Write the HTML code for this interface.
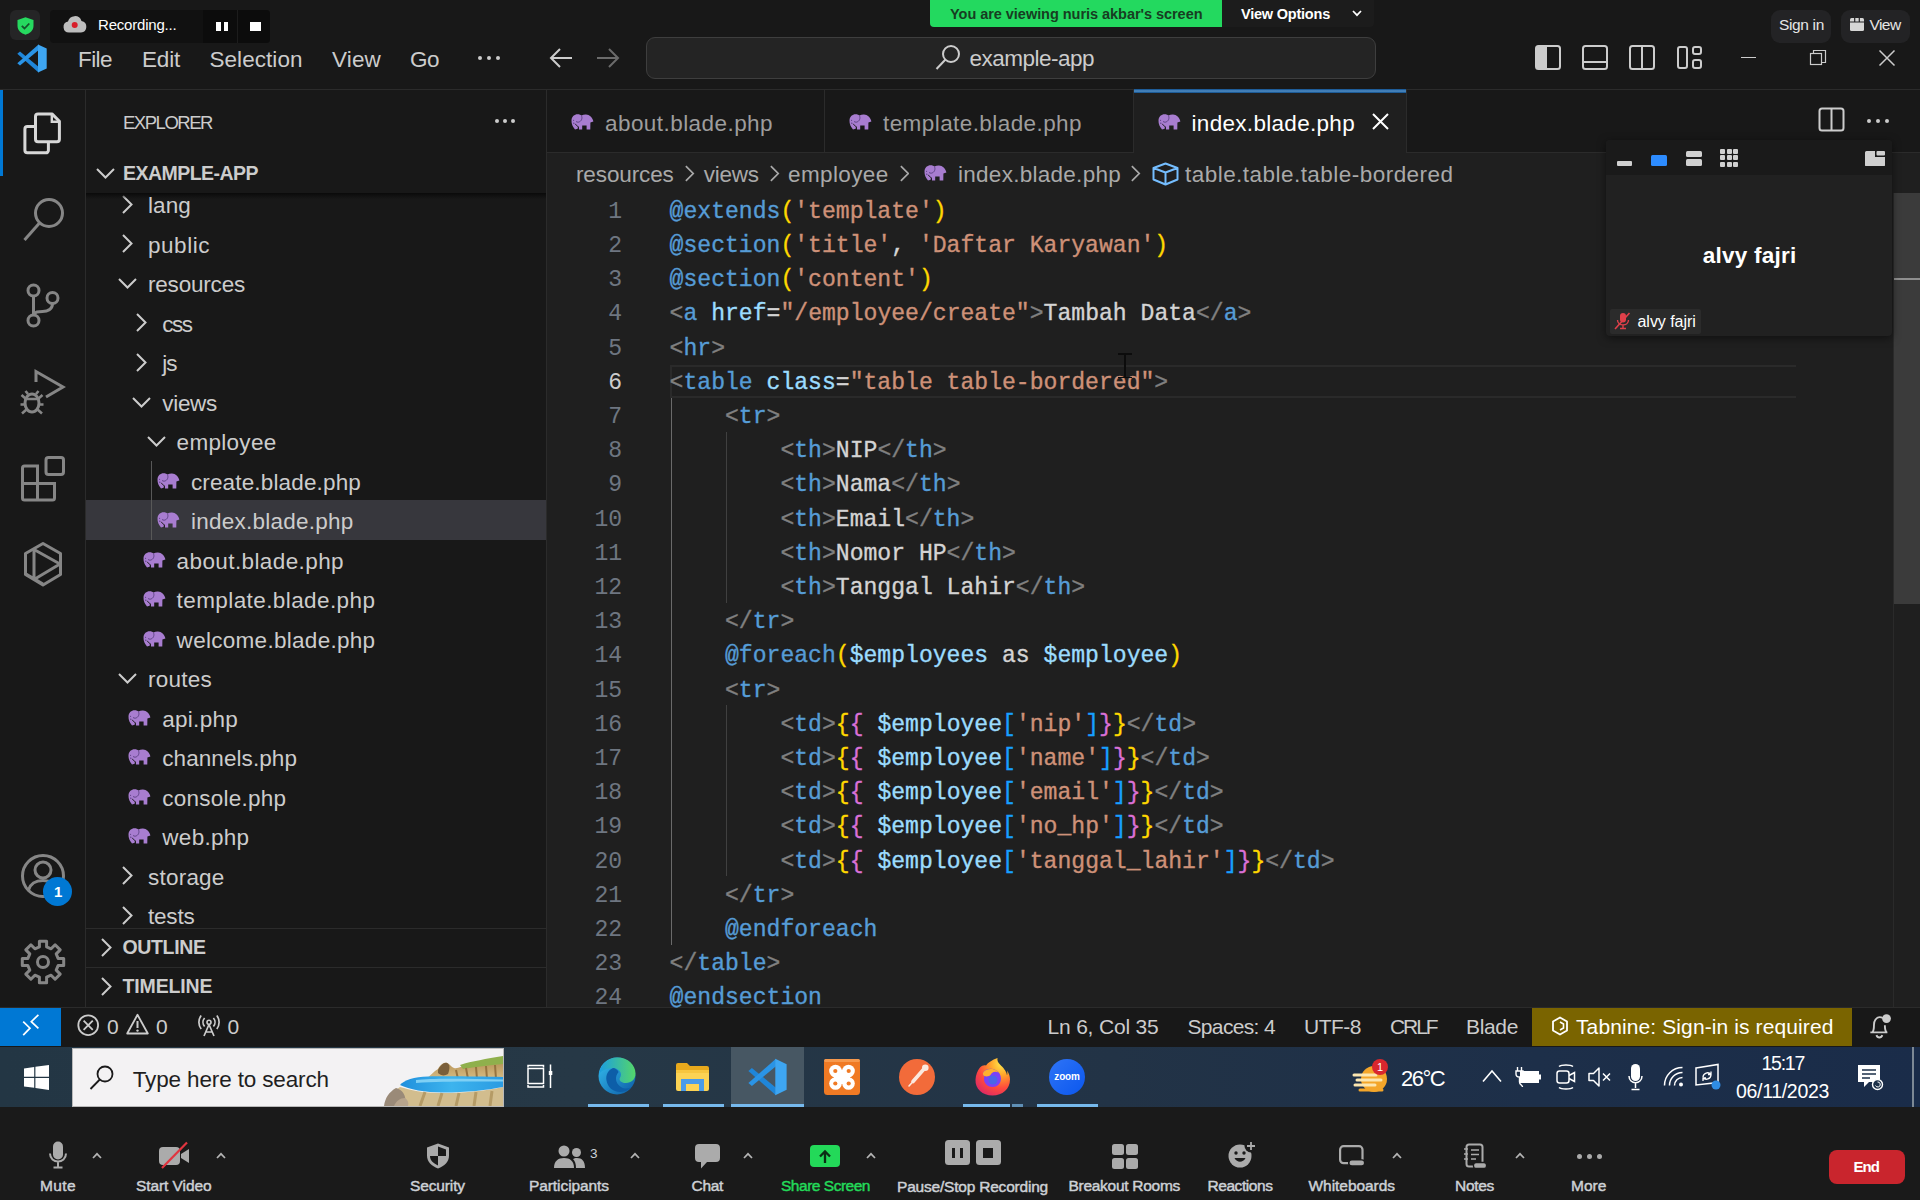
<!DOCTYPE html><html><head><meta charset="utf-8"><title>example-app</title><style>
html,body{margin:0;padding:0;background:#181818;overflow:hidden}
#root{position:relative;width:1920px;height:1200px;overflow:hidden;background:#181818;font-family:"Liberation Sans", sans-serif}
#root div,#root svg,#root span{position:absolute;display:block}
#root span{white-space:pre;line-height:1}
#root span i{font-style:normal}
</style></head><body><div id="root">
<div style="left:0px;top:0px;width:1920px;height:1007px;background:#181818;"></div>
<div style="left:0px;top:89px;width:1920px;height:1px;background:#2b2b2b;"></div>
<div style="left:85px;top:90px;width:1px;height:917px;background:#2b2b2b;"></div>
<div style="left:546px;top:90px;width:1px;height:917px;background:#2b2b2b;"></div>
<div style="left:547px;top:153px;width:1373px;height:854px;background:#1f1f1f;"></div>
<div style="left:547px;top:152px;width:1373px;height:1px;background:#2b2b2b;"></div>
<div style="left:824px;top:90px;width:1px;height:62px;background:#2b2b2b;"></div>
<div style="left:1133px;top:90px;width:1px;height:62px;background:#2b2b2b;"></div>
<div style="left:1134px;top:90px;width:272px;height:63px;background:#1f1f1f;"></div>
<div style="left:1134px;top:89px;width:272px;height:4px;background:linear-gradient(#0b4a88,#3f7cb6 35%,#4683ba 60%,#0b4a88);"></div>
<div style="left:1406px;top:90px;width:1px;height:62px;background:#2b2b2b;"></div>
<div style="left:0px;top:90px;width:3px;height:86px;background:#0078d4;"></div>
<div style="left:477.5px;top:55.5px;width:4px;height:4px;background:#cccccc;border-radius:2px;"></div>
<div style="left:486.5px;top:55.5px;width:4px;height:4px;background:#cccccc;border-radius:2px;"></div>
<div style="left:495.5px;top:55.5px;width:4px;height:4px;background:#cccccc;border-radius:2px;"></div>
<svg style="left:548px;top:46px;" width="26" height="24" viewBox="0 0 26 24"><path d="M24 12H3M12 3L3 12l9 9" fill="none" stroke="#cccccc" stroke-width="2"/></svg>
<svg style="left:595px;top:46px;" width="26" height="24" viewBox="0 0 26 24"><path d="M2 12h21M14 3l9 9-9 9" fill="none" stroke="#6b6b6b" stroke-width="2"/></svg>
<div style="left:646px;top:37px;width:730px;height:41.5px;background:#242424;border:1px solid #3e3e3e;border-radius:9px;box-sizing:border-box;"></div>
<svg style="left:934px;top:43px;" width="28" height="28" viewBox="0 0 28 28"><circle cx="17" cy="11" r="8" fill="none" stroke="#cccccc" stroke-width="2"/><path d="M11.5 16.5L2.5 26" stroke="#cccccc" stroke-width="2" fill="none"/></svg>
<svg style="left:1535px;top:45px;" width="26" height="25" viewBox="0 0 26 25"><rect x="1" y="1" width="24" height="23" rx="2.5" fill="none" stroke="#cccccc" stroke-width="2"/><path d="M1 3.5a2.5 2.5 0 0 1 2.5-2.5H12v23H3.5A2.5 2.5 0 0 1 1 21.5z" fill="#cccccc"/></svg>
<svg style="left:1582px;top:45px;" width="26" height="25" viewBox="0 0 26 25"><rect x="1" y="1" width="24" height="23" rx="2.5" fill="none" stroke="#cccccc" stroke-width="2"/><path d="M1 17h24" stroke="#cccccc" stroke-width="2"/></svg>
<svg style="left:1629px;top:45px;" width="26" height="25" viewBox="0 0 26 25"><rect x="1" y="1" width="24" height="23" rx="2.5" fill="none" stroke="#cccccc" stroke-width="2"/><path d="M13 1v23" stroke="#cccccc" stroke-width="2"/></svg>
<svg style="left:1677px;top:45px;" width="26" height="25" viewBox="0 0 26 25"><rect x="1" y="2" width="9" height="21" rx="2" fill="none" stroke="#cccccc" stroke-width="2"/><rect x="16" y="2" width="8" height="7" rx="2" fill="none" stroke="#cccccc" stroke-width="2"/><rect x="16" y="15" width="8" height="8" rx="2" fill="none" stroke="#cccccc" stroke-width="2"/></svg>
<div style="left:1741px;top:57px;width:15px;height:1.3px;background:#cccccc;"></div>
<svg style="left:1809px;top:49px;" width="18" height="18" viewBox="0 0 18 18"><rect x="1.5" y="4.5" width="11" height="11" fill="none" stroke="#cccccc" stroke-width="1.2"/><path d="M4.5 4.5v-3h12v12h-4" fill="none" stroke="#cccccc" stroke-width="1.2"/></svg>
<svg style="left:1878px;top:49px;" width="18" height="18" viewBox="0 0 18 18"><path d="M1.5 1.5l15 15M16.5 1.5l-15 15" stroke="#cccccc" stroke-width="1.5" fill="none"/></svg>
<svg style="left:17px;top:44px;" width="30" height="29" viewBox="0 0 30 29"><path d="M.3 9.800L3 7.6 21.5 22.800V28.600z" fill="#1f86d9"/><path d="M.3 19.200L3 21.4 21.5 6.200V.4z" fill="#2a94e6"/><path d="M21 .4L29.7 4.600V24.400L21 28.600z" fill="#3ea6f2"/></svg>
<svg style="left:22px;top:111px;" width="41" height="45" viewBox="0 0 41 45"><path d="M13.5 28.3V5.4a2.5 2.5 0 0 1 2.5-2.5H30L37.4 10.3V28.3a2.5 2.5 0 0 1-2.5 2.5H16a2.5 2.5 0 0 1-2.5-2.500z" fill="none" stroke="#d7d7d7" stroke-width="3" stroke-linejoin="round"/><path d="M29.8 3.5V10.8H37" fill="none" stroke="#d7d7d7" stroke-width="2.4"/><path d="M13.5 15.5H5.4a2.5 2.5 0 0 0-2.5 2.5V39.3a2.5 2.5 0 0 0 2.5 2.5H23.9a2.5 2.5 0 0 0 2.5-2.5V30.8" fill="none" stroke="#d7d7d7" stroke-width="3"/></svg>
<svg style="left:22px;top:196px;" width="44" height="46" viewBox="0 0 44 46"><circle cx="27" cy="17" r="13.5" fill="none" stroke="#868686" stroke-width="3"/><path d="M17.5 27L2.5 44" stroke="#868686" stroke-width="3" fill="none"/></svg>
<svg style="left:24px;top:282px;" width="38" height="48" viewBox="0 0 38 48"><circle cx="9.5" cy="8.5" r="5.5" fill="none" stroke="#868686" stroke-width="3"/><circle cx="9.5" cy="38.5" r="5.5" fill="none" stroke="#868686" stroke-width="3"/><circle cx="28.5" cy="16" r="5.5" fill="none" stroke="#868686" stroke-width="3"/><path d="M9.5 14v19M28.5 21.500c0 6-5 8-10 8-4 0-8 0-9 3.5" fill="none" stroke="#868686" stroke-width="3"/></svg>
<svg style="left:20px;top:368px;" width="46" height="48" viewBox="0 0 46 48"><path d="M16 14V3.500L43 19 26 29" fill="none" stroke="#868686" stroke-width="3" stroke-linejoin="miter"/><ellipse cx="12" cy="35" rx="7" ry="9" fill="none" stroke="#868686" stroke-width="3"/><path d="M5 31h14M1.5 27l4 3.500M22.5 27l-4 3.500M0.5 36.500h4.500M19 36.500h4.500M2 45.500l4.5-4M22 45.500l-4.5-4M8 26l-2.5-3M16 26l2.5-3" fill="none" stroke="#868686" stroke-width="2.6"/></svg>
<svg style="left:20px;top:455px;" width="46" height="47" viewBox="0 0 46 47"><path d="M17.5 11H4.500a2 2 0 0 0-2 2v30a2 2 0 0 0 2 2h28a2 2 0 0 0 2-2V28.500H17.500zM2.5 28.500h15V45" fill="none" stroke="#868686" stroke-width="3"/><rect x="26" y="2.5" width="17.5" height="17" rx="2.5" fill="none" stroke="#868686" stroke-width="3"/></svg>
<svg style="left:22px;top:541px;" width="42" height="47" viewBox="0 0 42 47"><path d="M21 2.500L38.5 12.500v21L21 44 3.5 33.500v-21z" fill="none" stroke="#868686" stroke-width="3" stroke-linejoin="round"/><path d="M12 8.500v30M12 8.500L38 23 12 38.500M4 33l17 10" fill="none" stroke="#868686" stroke-width="3" stroke-linejoin="round"/></svg>
<svg style="left:20px;top:853px;" width="46" height="46" viewBox="0 0 46 46"><circle cx="23" cy="23" r="20.5" fill="none" stroke="#868686" stroke-width="3"/><circle cx="23" cy="17" r="8" fill="none" stroke="#868686" stroke-width="3"/><path d="M8.5 37c2-6.5 8-9.5 14.5-9.500s12.5 3 14.5 9.5" fill="none" stroke="#868686" stroke-width="3"/></svg>
<div style="left:43px;top:876.5px;width:29px;height:29px;background:#0078d4;border-radius:15px;"></div>
<svg style="left:20px;top:939px;" width="46" height="46" viewBox="0 0 46 46"><path d="M19.4 2.3L26.6 2.3L26.6 7.9L31.1 9.8L35.1 5.8L40.2 10.9L36.2 14.9L38.1 19.4L43.7 19.4L43.7 26.6L38.1 26.6L36.2 31.1L40.2 35.1L35.1 40.2L31.1 36.2L26.6 38.1L26.6 43.7L19.4 43.7L19.4 38.1L14.9 36.2L10.9 40.2L5.8 35.1L9.8 31.1L7.9 26.6L2.3 26.6L2.3 19.4L7.9 19.4L9.8 14.9L5.8 10.9L10.9 5.8L14.9 9.8L19.4 7.9z" fill="none" stroke="#868686" stroke-width="3" stroke-linejoin="round"/><circle cx="23" cy="23" r="5.5" fill="none" stroke="#868686" stroke-width="3"/></svg>
<div style="left:495px;top:118.5px;width:4px;height:4px;background:#cccccc;border-radius:2px;"></div>
<div style="left:503px;top:118.5px;width:4px;height:4px;background:#cccccc;border-radius:2px;"></div>
<div style="left:511px;top:118.5px;width:4px;height:4px;background:#cccccc;border-radius:2px;"></div>
<div style="left:86px;top:500px;width:460px;height:40px;background:#37373d;"></div>
<div style="left:151px;top:461px;width:1px;height:79px;background:#585858;"></div>
<svg style="left:122px;top:194.5px;" width="11" height="19" viewBox="0 0 11 19"><path d="M1 1l8.5 8.500L1 18" fill="none" stroke="#cccccc" stroke-width="2"/></svg>
<svg style="left:122px;top:234px;" width="11" height="19" viewBox="0 0 11 19"><path d="M1 1l8.5 8.500L1 18" fill="none" stroke="#cccccc" stroke-width="2"/></svg>
<svg style="left:118px;top:278px;" width="19" height="11" viewBox="0 0 19 11"><path d="M1 1l8.5 8.500L18 1" fill="none" stroke="#cccccc" stroke-width="2"/></svg>
<svg style="left:136.3px;top:313px;" width="11" height="19" viewBox="0 0 11 19"><path d="M1 1l8.5 8.500L1 18" fill="none" stroke="#cccccc" stroke-width="2"/></svg>
<svg style="left:136.3px;top:352.5px;" width="11" height="19" viewBox="0 0 11 19"><path d="M1 1l8.5 8.500L1 18" fill="none" stroke="#cccccc" stroke-width="2"/></svg>
<svg style="left:132.3px;top:396.5px;" width="19" height="11" viewBox="0 0 19 11"><path d="M1 1l8.5 8.500L18 1" fill="none" stroke="#cccccc" stroke-width="2"/></svg>
<svg style="left:146.6px;top:436px;" width="19" height="11" viewBox="0 0 19 11"><path d="M1 1l8.5 8.500L18 1" fill="none" stroke="#cccccc" stroke-width="2"/></svg>
<svg style="left:156.9px;top:472.5px;" width="23" height="16" viewBox="0 0 23 16"><path d="M4 15.6C2 13 .3 10 .5 6.5.7 2.5 3.5.3 6.5.3 8.5.3 9.8.9 10.5 1.6 11.8.8 13.5.4 15 .500 18.5.7 21.5 3.5 22.4 7.600L19.4 8.6 19.3 15.600H15.600V11.600H11.200V15.600H8L7.4 12.6 6.8 14.800z" fill="#a87dd0"/><path d="M10.4 1.700C11.7 4 10.6 7.6 7.2 8.2 6.3 8.3 5.5 7.9 5 7.4" fill="none" stroke="#4b3470" stroke-width=".75"/><path d="M4.3 9.800C5.2 11.3 6.3 12.3 7.3 12.700L7.3 15.6" fill="none" stroke="#181818" stroke-width="1"/><circle cx="2.6" cy="6.2" r=".55" fill="#4b3470"/><circle cx="2.8" cy="9.2" r=".6" fill="#4b3470"/></svg>
<svg style="left:156.9px;top:512px;" width="23" height="16" viewBox="0 0 23 16"><path d="M4 15.6C2 13 .3 10 .5 6.5.7 2.5 3.5.3 6.5.3 8.5.3 9.8.9 10.5 1.6 11.8.8 13.5.4 15 .500 18.5.7 21.5 3.5 22.4 7.600L19.4 8.6 19.3 15.600H15.600V11.600H11.200V15.600H8L7.4 12.6 6.8 14.800z" fill="#a87dd0"/><path d="M10.4 1.700C11.7 4 10.6 7.6 7.2 8.2 6.3 8.3 5.5 7.9 5 7.4" fill="none" stroke="#4b3470" stroke-width=".75"/><path d="M4.3 9.800C5.2 11.3 6.3 12.3 7.3 12.700L7.3 15.6" fill="none" stroke="#181818" stroke-width="1"/><circle cx="2.6" cy="6.2" r=".55" fill="#4b3470"/><circle cx="2.8" cy="9.2" r=".6" fill="#4b3470"/></svg>
<svg style="left:142.6px;top:551.5px;" width="23" height="16" viewBox="0 0 23 16"><path d="M4 15.6C2 13 .3 10 .5 6.5.7 2.5 3.5.3 6.5.3 8.5.3 9.8.9 10.5 1.6 11.8.8 13.5.4 15 .500 18.5.7 21.5 3.5 22.4 7.600L19.4 8.6 19.3 15.600H15.600V11.600H11.200V15.600H8L7.4 12.6 6.8 14.800z" fill="#a87dd0"/><path d="M10.4 1.700C11.7 4 10.6 7.6 7.2 8.2 6.3 8.3 5.5 7.9 5 7.4" fill="none" stroke="#4b3470" stroke-width=".75"/><path d="M4.3 9.800C5.2 11.3 6.3 12.3 7.3 12.700L7.3 15.6" fill="none" stroke="#181818" stroke-width="1"/><circle cx="2.6" cy="6.2" r=".55" fill="#4b3470"/><circle cx="2.8" cy="9.2" r=".6" fill="#4b3470"/></svg>
<svg style="left:142.6px;top:591px;" width="23" height="16" viewBox="0 0 23 16"><path d="M4 15.6C2 13 .3 10 .5 6.5.7 2.5 3.5.3 6.5.3 8.5.3 9.8.9 10.5 1.6 11.8.8 13.5.4 15 .500 18.5.7 21.5 3.5 22.4 7.600L19.4 8.6 19.3 15.600H15.600V11.600H11.200V15.600H8L7.4 12.6 6.8 14.800z" fill="#a87dd0"/><path d="M10.4 1.700C11.7 4 10.6 7.6 7.2 8.2 6.3 8.3 5.5 7.9 5 7.4" fill="none" stroke="#4b3470" stroke-width=".75"/><path d="M4.3 9.800C5.2 11.3 6.3 12.3 7.3 12.700L7.3 15.6" fill="none" stroke="#181818" stroke-width="1"/><circle cx="2.6" cy="6.2" r=".55" fill="#4b3470"/><circle cx="2.8" cy="9.2" r=".6" fill="#4b3470"/></svg>
<svg style="left:142.6px;top:630.5px;" width="23" height="16" viewBox="0 0 23 16"><path d="M4 15.6C2 13 .3 10 .5 6.5.7 2.5 3.5.3 6.5.3 8.5.3 9.8.9 10.5 1.6 11.8.8 13.5.4 15 .500 18.5.7 21.5 3.5 22.4 7.600L19.4 8.6 19.3 15.600H15.600V11.600H11.200V15.600H8L7.4 12.6 6.8 14.800z" fill="#a87dd0"/><path d="M10.4 1.700C11.7 4 10.6 7.6 7.2 8.2 6.3 8.3 5.5 7.9 5 7.4" fill="none" stroke="#4b3470" stroke-width=".75"/><path d="M4.3 9.800C5.2 11.3 6.3 12.3 7.3 12.700L7.3 15.6" fill="none" stroke="#181818" stroke-width="1"/><circle cx="2.6" cy="6.2" r=".55" fill="#4b3470"/><circle cx="2.8" cy="9.2" r=".6" fill="#4b3470"/></svg>
<svg style="left:118px;top:673px;" width="19" height="11" viewBox="0 0 19 11"><path d="M1 1l8.5 8.500L18 1" fill="none" stroke="#cccccc" stroke-width="2"/></svg>
<svg style="left:128.3px;top:709.5px;" width="23" height="16" viewBox="0 0 23 16"><path d="M4 15.6C2 13 .3 10 .5 6.5.7 2.5 3.5.3 6.5.3 8.5.3 9.8.9 10.5 1.6 11.8.8 13.5.4 15 .500 18.5.7 21.5 3.5 22.4 7.600L19.4 8.6 19.3 15.600H15.600V11.600H11.200V15.600H8L7.4 12.6 6.8 14.800z" fill="#a87dd0"/><path d="M10.4 1.700C11.7 4 10.6 7.6 7.2 8.2 6.3 8.3 5.5 7.9 5 7.4" fill="none" stroke="#4b3470" stroke-width=".75"/><path d="M4.3 9.800C5.2 11.3 6.3 12.3 7.3 12.700L7.3 15.6" fill="none" stroke="#181818" stroke-width="1"/><circle cx="2.6" cy="6.2" r=".55" fill="#4b3470"/><circle cx="2.8" cy="9.2" r=".6" fill="#4b3470"/></svg>
<svg style="left:128.3px;top:749px;" width="23" height="16" viewBox="0 0 23 16"><path d="M4 15.6C2 13 .3 10 .5 6.5.7 2.5 3.5.3 6.5.3 8.5.3 9.8.9 10.5 1.6 11.8.8 13.5.4 15 .500 18.5.7 21.5 3.5 22.4 7.600L19.4 8.6 19.3 15.600H15.600V11.600H11.200V15.600H8L7.4 12.6 6.8 14.800z" fill="#a87dd0"/><path d="M10.4 1.700C11.7 4 10.6 7.6 7.2 8.2 6.3 8.3 5.5 7.9 5 7.4" fill="none" stroke="#4b3470" stroke-width=".75"/><path d="M4.3 9.800C5.2 11.3 6.3 12.3 7.3 12.700L7.3 15.6" fill="none" stroke="#181818" stroke-width="1"/><circle cx="2.6" cy="6.2" r=".55" fill="#4b3470"/><circle cx="2.8" cy="9.2" r=".6" fill="#4b3470"/></svg>
<svg style="left:128.3px;top:788.5px;" width="23" height="16" viewBox="0 0 23 16"><path d="M4 15.6C2 13 .3 10 .5 6.5.7 2.5 3.5.3 6.5.3 8.5.3 9.8.9 10.5 1.6 11.8.8 13.5.4 15 .500 18.5.7 21.5 3.5 22.4 7.600L19.4 8.6 19.3 15.600H15.600V11.600H11.200V15.600H8L7.4 12.6 6.8 14.800z" fill="#a87dd0"/><path d="M10.4 1.700C11.7 4 10.6 7.6 7.2 8.2 6.3 8.3 5.5 7.9 5 7.4" fill="none" stroke="#4b3470" stroke-width=".75"/><path d="M4.3 9.800C5.2 11.3 6.3 12.3 7.3 12.700L7.3 15.6" fill="none" stroke="#181818" stroke-width="1"/><circle cx="2.6" cy="6.2" r=".55" fill="#4b3470"/><circle cx="2.8" cy="9.2" r=".6" fill="#4b3470"/></svg>
<svg style="left:128.3px;top:828px;" width="23" height="16" viewBox="0 0 23 16"><path d="M4 15.6C2 13 .3 10 .5 6.5.7 2.5 3.5.3 6.5.3 8.5.3 9.8.9 10.5 1.6 11.8.8 13.5.4 15 .500 18.5.7 21.5 3.5 22.4 7.600L19.4 8.6 19.3 15.600H15.600V11.600H11.200V15.600H8L7.4 12.6 6.8 14.800z" fill="#a87dd0"/><path d="M10.4 1.700C11.7 4 10.6 7.6 7.2 8.2 6.3 8.3 5.5 7.9 5 7.4" fill="none" stroke="#4b3470" stroke-width=".75"/><path d="M4.3 9.800C5.2 11.3 6.3 12.3 7.3 12.700L7.3 15.6" fill="none" stroke="#181818" stroke-width="1"/><circle cx="2.6" cy="6.2" r=".55" fill="#4b3470"/><circle cx="2.8" cy="9.2" r=".6" fill="#4b3470"/></svg>
<svg style="left:122px;top:866px;" width="11" height="19" viewBox="0 0 11 19"><path d="M1 1l8.5 8.500L1 18" fill="none" stroke="#cccccc" stroke-width="2"/></svg>
<svg style="left:122px;top:905.5px;" width="11" height="19" viewBox="0 0 11 19"><path d="M1 1l8.5 8.500L1 18" fill="none" stroke="#cccccc" stroke-width="2"/></svg>
<div style="left:86px;top:153px;width:460px;height:40px;background:#181818;"></div>
<div style="left:86px;top:193px;width:460px;height:6px;background:linear-gradient(#0a0a0a,rgba(10,10,10,0));"></div>
<svg style="left:96px;top:167.5px;" width="19" height="11" viewBox="0 0 19 11"><path d="M1 1l8.5 8.500L18 1" fill="none" stroke="#cccccc" stroke-width="2"/></svg>
<div style="left:86px;top:927.5px;width:460px;height:79.5px;background:#181818;"></div>
<div style="left:86px;top:927.5px;width:460px;height:1px;background:#2b2b2b;"></div>
<div style="left:86px;top:967px;width:460px;height:1px;background:#2b2b2b;"></div>
<svg style="left:100.5px;top:937.5px;" width="11" height="19" viewBox="0 0 11 19"><path d="M1 1l8.5 8.500L1 18" fill="none" stroke="#cccccc" stroke-width="2"/></svg>
<svg style="left:100.5px;top:977px;" width="11" height="19" viewBox="0 0 11 19"><path d="M1 1l8.5 8.500L1 18" fill="none" stroke="#cccccc" stroke-width="2"/></svg>
<svg style="left:571px;top:114px;" width="23" height="16" viewBox="0 0 23 16"><path d="M4 15.6C2 13 .3 10 .5 6.5.7 2.5 3.5.3 6.5.3 8.5.3 9.8.9 10.5 1.6 11.8.8 13.5.4 15 .500 18.5.7 21.5 3.5 22.4 7.600L19.4 8.6 19.3 15.600H15.600V11.600H11.200V15.600H8L7.4 12.6 6.8 14.800z" fill="#a87dd0"/><path d="M10.4 1.700C11.7 4 10.6 7.6 7.2 8.2 6.3 8.3 5.5 7.9 5 7.4" fill="none" stroke="#4b3470" stroke-width=".75"/><path d="M4.3 9.800C5.2 11.3 6.3 12.3 7.3 12.700L7.3 15.6" fill="none" stroke="#181818" stroke-width="1"/><circle cx="2.6" cy="6.2" r=".55" fill="#4b3470"/><circle cx="2.8" cy="9.2" r=".6" fill="#4b3470"/></svg>
<svg style="left:849px;top:114px;" width="23" height="16" viewBox="0 0 23 16"><path d="M4 15.6C2 13 .3 10 .5 6.5.7 2.5 3.5.3 6.5.3 8.5.3 9.8.9 10.5 1.6 11.8.8 13.5.4 15 .500 18.5.7 21.5 3.5 22.4 7.600L19.4 8.6 19.3 15.600H15.600V11.600H11.200V15.600H8L7.4 12.6 6.8 14.800z" fill="#a87dd0"/><path d="M10.4 1.700C11.7 4 10.6 7.6 7.2 8.2 6.3 8.3 5.5 7.9 5 7.4" fill="none" stroke="#4b3470" stroke-width=".75"/><path d="M4.3 9.800C5.2 11.3 6.3 12.3 7.3 12.700L7.3 15.6" fill="none" stroke="#181818" stroke-width="1"/><circle cx="2.6" cy="6.2" r=".55" fill="#4b3470"/><circle cx="2.8" cy="9.2" r=".6" fill="#4b3470"/></svg>
<svg style="left:1158px;top:114px;" width="23" height="16" viewBox="0 0 23 16"><path d="M4 15.6C2 13 .3 10 .5 6.5.7 2.5 3.5.3 6.5.3 8.5.3 9.8.9 10.5 1.6 11.8.8 13.5.4 15 .500 18.5.7 21.5 3.5 22.4 7.600L19.4 8.6 19.3 15.600H15.600V11.600H11.200V15.600H8L7.4 12.6 6.8 14.800z" fill="#a87dd0"/><path d="M10.4 1.700C11.7 4 10.6 7.6 7.2 8.2 6.3 8.3 5.5 7.9 5 7.4" fill="none" stroke="#4b3470" stroke-width=".75"/><path d="M4.3 9.800C5.2 11.3 6.3 12.3 7.3 12.700L7.3 15.6" fill="none" stroke="#181818" stroke-width="1"/><circle cx="2.6" cy="6.2" r=".55" fill="#4b3470"/><circle cx="2.8" cy="9.2" r=".6" fill="#4b3470"/></svg>
<svg style="left:1371px;top:112px;" width="19" height="19" viewBox="0 0 19 19"><path d="M2 2l15 15M17 2L2 17" stroke="#ffffff" stroke-width="2" fill="none"/></svg>
<svg style="left:1818px;top:107px;" width="27" height="25" viewBox="0 0 27 25"><rect x="1.5" y="1.5" width="24" height="22" rx="2.5" fill="none" stroke="#cccccc" stroke-width="2"/><path d="M13.5 1.5v22" stroke="#cccccc" stroke-width="2"/></svg>
<div style="left:1866.5px;top:118.5px;width:4px;height:4px;background:#cccccc;border-radius:2px;"></div>
<div style="left:1875.5px;top:118.5px;width:4px;height:4px;background:#cccccc;border-radius:2px;"></div>
<div style="left:1884.5px;top:118.5px;width:4px;height:4px;background:#cccccc;border-radius:2px;"></div>
<svg style="left:685px;top:164.5px;" width="9.5" height="17" viewBox="0 0 11 19"><path d="M1 1l8.5 8.500L1 18" fill="none" stroke="#a9a9a9" stroke-width="2"/></svg>
<svg style="left:770px;top:164.5px;" width="9.5" height="17" viewBox="0 0 11 19"><path d="M1 1l8.5 8.500L1 18" fill="none" stroke="#a9a9a9" stroke-width="2"/></svg>
<svg style="left:899.5px;top:164.5px;" width="9.5" height="17" viewBox="0 0 11 19"><path d="M1 1l8.5 8.500L1 18" fill="none" stroke="#a9a9a9" stroke-width="2"/></svg>
<svg style="left:924px;top:165px;" width="23" height="16" viewBox="0 0 23 16"><path d="M4 15.6C2 13 .3 10 .5 6.5.7 2.5 3.5.3 6.5.3 8.5.3 9.8.9 10.5 1.6 11.8.8 13.5.4 15 .500 18.5.7 21.5 3.5 22.4 7.600L19.4 8.6 19.3 15.600H15.600V11.600H11.200V15.600H8L7.4 12.6 6.8 14.800z" fill="#a87dd0"/><path d="M10.4 1.700C11.7 4 10.6 7.6 7.2 8.2 6.3 8.3 5.5 7.9 5 7.4" fill="none" stroke="#4b3470" stroke-width=".75"/><path d="M4.3 9.800C5.2 11.3 6.3 12.3 7.3 12.700L7.3 15.6" fill="none" stroke="#181818" stroke-width="1"/><circle cx="2.6" cy="6.2" r=".55" fill="#4b3470"/><circle cx="2.8" cy="9.2" r=".6" fill="#4b3470"/></svg>
<svg style="left:1131px;top:164.5px;" width="9.5" height="17" viewBox="0 0 11 19"><path d="M1 1l8.5 8.500L1 18" fill="none" stroke="#a9a9a9" stroke-width="2"/></svg>
<svg style="left:1152px;top:162px;" width="27" height="24" viewBox="0 0 27 24"><path d="M13.5 1.5L25.5 6v11.5L13.5 22.5 1.5 17.5V6zM1.5 6l12 4.500L25.5 6M13.5 10.500v12" fill="none" stroke="#75beff" stroke-width="2" stroke-linejoin="round"/></svg>
<div style="left:670px;top:364.5px;width:1126px;height:33.5px;background:transparent;border:2px solid #2a2a2a;border-right:none;box-sizing:border-box;"></div>
<div style="left:670.5px;top:398px;width:1px;height:547.2px;background:#6a6a6a;"></div>
<div style="left:725.9px;top:432px;width:1px;height:171px;background:#404040;"></div>
<div style="left:725.9px;top:704.6px;width:1px;height:171px;background:#404040;"></div>
<div style="left:1894px;top:193px;width:26px;height:411px;background:#3b3b3b;"></div>
<div style="left:1894px;top:278px;width:26px;height:2px;background:#8f8f8f;"></div>
<div style="left:1893px;top:193px;width:1px;height:814px;background:#2a2a2a;"></div>
<div style="left:0px;top:1007px;width:1920px;height:40px;background:#181818;"></div>
<div style="left:0px;top:1006.5px;width:1920px;height:1px;background:#2b2b2b;"></div>
<div style="left:0px;top:1007.5px;width:60.7px;height:38.5px;background:#0078d4;"></div>
<svg style="left:20px;top:1010px;" width="24" height="30" viewBox="0 0 24 30"><path d="M3.2 11.700L10 18.2 3.2 25.200M18.4 4.800L11.3 11.7 18.4 18.4" fill="none" stroke="#ffffff" stroke-width="1.7"/></svg>
<svg style="left:76.8px;top:1014.2px;" width="22.4" height="22.4" viewBox="0 0 22 22"><circle cx="11" cy="11" r="9.7" fill="none" stroke="#cccccc" stroke-width="1.8"/><path d="M6.5 6.500l9 9M15.5 6.500l-9 9" stroke="#cccccc" stroke-width="1.8" fill="none"/></svg>
<svg style="left:125.5px;top:1012.8px;" width="23" height="22" viewBox="0 0 23 22"><path d="M11.5 1.800L21.8 20.500H1.200z" fill="none" stroke="#cccccc" stroke-width="1.8" stroke-linejoin="round"/><path d="M11.5 8v7" stroke="#cccccc" stroke-width="2"/><circle cx="11.5" cy="17.6" r="1.2" fill="#cccccc"/></svg>
<svg style="left:197.5px;top:1013px;" width="22" height="24" viewBox="0 0 22 24"><path d="M3.2 2.500a11 11 0 0 0 0 13.500M18.8 2.500a11 11 0 0 1 0 13.500M6.6 5a6.5 6.5 0 0 0 0 8.500M15.4 5a6.5 6.5 0 0 1 0 8.5" fill="none" stroke="#cccccc" stroke-width="1.7"/><circle cx="11" cy="9.2" r="2" fill="none" stroke="#cccccc" stroke-width="1.6"/><path d="M11 11.500L6 23M11 11.500L16 23M7.8 19h6.4" fill="none" stroke="#cccccc" stroke-width="1.7"/></svg>
<div style="left:1531.5px;top:1007.5px;width:320px;height:38.5px;background:#7a6400;"></div>
<svg style="left:1551px;top:1016px;" width="18" height="20" viewBox="0 0 18 20"><path d="M9 1.500l7 4v9l-7 4-7-4v-9z" fill="none" stroke="#ffffff" stroke-width="1.8" stroke-linejoin="round"/><path d="M9 6l3.5 2v4L9 14" fill="none" stroke="#ffffff" stroke-width="1.6"/></svg>
<svg style="left:1867px;top:1012px;" width="26.5" height="27.5" viewBox="0 0 24 25"><path d="M3 18.500h15.500M4.8 18.500c1.5-1.5 1.5-3 1.5-7 0-3.5 2-6.8 5.2-6.8 1 0 2 .3 2.7.8M16.2 12c0 3 .2 5 1.5 6.500M8.5 21c.5 1.5 1.5 2.2 2.7 2.200s2.2-.7 2.7-2.2" fill="none" stroke="#cccccc" stroke-width="1.7"/><circle cx="17.7" cy="6" r="4" fill="#cccccc"/></svg>
<div style="left:0px;top:1047px;width:1920px;height:60px;background:linear-gradient(90deg,#233644 0%,#263846 30%,#223346 58%,#1d2f49 80%,#1a2c49 100%);"></div>
<svg style="left:24px;top:1064.5px;" width="25" height="25" viewBox="0 0 25 25"><path d="M0 3.400L10.2 2v9.800H0zM11.4 1.800L25 0v11.800H11.400zM0 13h10.200v9.800L0 21.400zM11.4 13H25v12l-13.6-1.900z" fill="#ffffff"/></svg>
<div style="left:72px;top:1047.5px;width:432px;height:59px;background:#f3f2f3;border:1px solid #b9b9b9;box-sizing:border-box;overflow:hidden;"></div>
<svg style="left:89px;top:1064px;" width="26" height="26" viewBox="0 0 26 26"><circle cx="16" cy="10" r="7.5" fill="none" stroke="#1a1a1a" stroke-width="1.8"/><path d="M10.8 15.500L1.5 25" stroke="#1a1a1a" stroke-width="1.8" fill="none"/></svg>
<svg style="left:380px;top:1048.5px;" width="123" height="57" viewBox="0 0 123 57"><defs><linearGradient id="cf" x1="0" y1="0" x2="0" y2="1"><stop offset="0" stop-color="#b08a4e"/><stop offset="1" stop-color="#d9bf86"/></linearGradient><linearGradient id="lk" x1="0" y1="0" x2="1" y2="0"><stop offset="0" stop-color="#1f8fdc"/><stop offset=".5" stop-color="#3db4ee"/><stop offset="1" stop-color="#2a9be2"/></linearGradient><linearGradient id="fd" x1="0" y1="0" x2="1" y2="0"><stop offset="0" stop-color="#f3f2f3"/><stop offset="1" stop-color="#f3f2f3" stop-opacity="0"/></linearGradient></defs><path d="M46 30c4-3 8-8 12-10 2-4 6-7 9-6 3 1 4 4 7 5 4 1 8-2 12-3 12-3 24-5 37-7v22z" fill="url(#cf)"/><path d="M80 16c12-4 26-6 43-9v8c-14 1-28 3-40 5z" fill="#8fb04c"/><path d="M58 21c2-4 6-8 9-7 3 1 3 6 1 11-3 2-7 2-10-1z" fill="#7a5f3a"/><path d="M76 21l2 9M86 19l2 11M96 18l1 12M106 17l1 13M115 16l1 14" stroke="#96733f" stroke-width="2" fill="none"/><path d="M8 57c1-8 5-15 12-19 10 3 24 6 40 6 24 0 44-2 63-6v19z" fill="#d2bd8e"/><path d="M40 57l5-14M58 57l4-13M76 57l3-13M94 57l2-14M110 57l2-15" stroke="#b59b66" stroke-width="3" fill="none"/><path d="M20 36c4-5 14-8 28-8.5 20-.5 52 0 75 .5v10c-16 3-36 5.5-60 5.5-18 0-34-3-43-7.500z" fill="url(#lk)"/><path d="M36 31c14-2 50-1.5 87-.5v2c-30 0-62-.5-87 1.500z" fill="#7fd0f5"/><path d="M4 57c1-8 5-14 12-18 4 1 8 4 9 9 1 4-1 7-4 9z" fill="#9a8a78"/><path d="M14 57c2-5 6-8 11-8 3 2 4 5 3 8z" fill="#b7a48c"/></svg>
<svg style="left:526px;top:1063px;" width="28" height="27" viewBox="0 0 28 27"><rect x="2" y="5.5" width="15.5" height="15" fill="none" stroke="#ffffff" stroke-width="1.5"/><path d="M2 4.500V2.500H17.500V4.500M2 22V24H17.500V22M24.5 1.500V25" fill="none" stroke="#ffffff" stroke-width="1.5"/><rect x="22.8" y="8" width="3.5" height="4" fill="#ffffff"/></svg>
<div style="left:731px;top:1047px;width:73px;height:60px;background:#475763;"></div>
<div style="left:587.5px;top:1104px;width:61px;height:3px;background:#76b9ed;"></div>
<div style="left:662.5px;top:1104px;width:61px;height:3px;background:#76b9ed;"></div>
<div style="left:731px;top:1104px;width:73px;height:3px;background:#76b9ed;"></div>
<div style="left:962.5px;top:1104px;width:47px;height:3px;background:#76b9ed;"></div>
<div style="left:1012px;top:1104px;width:10.5px;height:3px;background:#5f8fb5;"></div>
<div style="left:1036.5px;top:1104px;width:61px;height:3px;background:#76b9ed;"></div>
<svg style="left:598px;top:1057px;" width="38" height="38" viewBox="0 0 38 38"><defs><linearGradient id="eg1" x1="0" y1="0" x2="1" y2="1"><stop offset="0" stop-color="#35c1f1"/><stop offset="1" stop-color="#0c59a4"/></linearGradient><linearGradient id="eg2" x1="0" y1="0" x2="1" y2="0"><stop offset="0" stop-color="#1b9de2"/><stop offset="1" stop-color="#54d66a"/></linearGradient></defs><circle cx="19" cy="19" r="18.5" fill="url(#eg1)"/><path d="M1 17C2.5 7 10 .500 19.5 .500 30 .500 37.5 8 37.5 16.500c0 6-4.5 9.5-9.5 9.5-4 0-6.5-2-6.5-4 0-1.5 1.5-2 1.5-4.5 0-3.5-3.5-6.5-8-6.500C9 11 3 14 1 17z" fill="url(#eg2)"/><path d="M15 11c-5 2-7.5 7-6.5 12.500C9.5 30 15 35 22 35c4 0 8-1.5 11-4.5-3 1.5-7 1.5-10-.5-4-2.5-6-7-4.5-11.5.5-1.5 1.5-2.5 2-3.5-1-2.5-3-3.8-5.5-4z" fill="#0d5ea8"/></svg>
<svg style="left:675px;top:1062px;" width="35" height="30" viewBox="0 0 35 30"><path d="M1 3a2 2 0 0 1 2-2h9l3 3h17a2 2 0 0 1 2 2v20H1z" fill="#e8a91c"/><path d="M1 8h33v19a2 2 0 0 1-2 2H3a2 2 0 0 1-2-2z" fill="#fcd354"/><path d="M6 17h23v12H6z" fill="#4a9be8"/><path d="M11 22h13v7H11z" fill="#fcd354"/><path d="M1 8h33v3H1z" fill="#f7c63f"/></svg>
<svg style="left:747.5px;top:1057.5px;" width="39" height="38" viewBox="0 0 30 29"><path d="M.3 9.800L3 7.6 21.5 22.800V28.600z" fill="#1f86d9"/><path d="M.3 19.200L3 21.4 21.5 6.200V.4z" fill="#2a94e6"/><path d="M21 .4L29.7 4.600V24.400L21 28.600z" fill="#3ea6f2"/></svg>
<svg style="left:824px;top:1059px;" width="36" height="36" viewBox="0 0 36 36"><rect x="0" y="0" width="36" height="36" rx="3.5" fill="#f07a24"/><rect x="0" y="0" width="36" height="3" rx="1.5" fill="#f7994d"/><g fill="#ffffff"><circle cx="11.5" cy="12" r="6.3"/><circle cx="24.5" cy="12" r="6.3"/><circle cx="11.5" cy="24.5" r="6.3"/><circle cx="24.5" cy="24.5" r="6.3"/><rect x="10" y="11" width="16" height="14"/></g><g fill="#f07a24"><circle cx="11.3" cy="12" r="2.1"/><circle cx="24.7" cy="12" r="2.1"/><circle cx="11.3" cy="24.5" r="2.1"/><circle cx="24.7" cy="24.5" r="2.1"/><rect x="3" y="16.7" width="4.5" height="3"/><rect x="28.5" y="16.7" width="4.5" height="3"/></g></svg>
<svg style="left:899px;top:1059px;" width="36" height="36" viewBox="0 0 36 36"><circle cx="18" cy="18" r="18" fill="#f26b3a"/><path d="M10 27L15 21.5" stroke="#fbe9df" stroke-width="1.6" stroke-linecap="round"/><path d="M14 22.500L24.5 10.5" stroke="#fbe9df" stroke-width="3.6" stroke-linecap="round"/><circle cx="26.3" cy="8.7" r="3.3" fill="#fbe9df"/></svg>
<svg style="left:974px;top:1057.5px;" width="37" height="38" viewBox="0 0 37 38"><defs><radialGradient id="ff1" cx=".75" cy=".15" r="1.05"><stop offset="0" stop-color="#ffe84a"/><stop offset=".3" stop-color="#ffa32b"/><stop offset=".62" stop-color="#ff4a3d"/><stop offset="1" stop-color="#d3206f"/></radialGradient></defs><path d="M6 9.500C8 7.5 10 7 12 7.5 14 4.5 18 2 23.5 0c-.5 2.5.5 4.5 2.5 6.5 3 3 6.5 6.5 7 11 .5-1.5.5-3 0-5 2 3 3 6 3 9C36 31 28.5 37.5 18.5 37.500S1 31 1.5 21.500C1.7 17 3.5 12.5 6 9.500z" fill="url(#ff1)"/><path d="M9.5 14c3-3.5 8-4 12-2 3.5 1.8 5.5 5 5.5 8.5 0 5-4 8.5-8.5 8.500S10 25.5 10 21c0-1 .2-2 .5-3-1.5-.5-2-2.5-1-4z" fill="#7b42f6"/><path d="M9.5 14c2-2.5 5.5-3.5 9-3 2.5.4 4.5 1.5 6 3.5-2.5-1-5-.8-6.5.5-1.2 1-1.5 2.5-3 3-1.5.5-3.5.5-4.5 0-1.5-.5-2-2.5-1-4z" fill="#ffb02e"/><circle cx="19" cy="22" r="4.5" fill="#4a66e8"/></svg>
<svg style="left:1049px;top:1059px;" width="36" height="36" viewBox="0 0 36 36"><defs><linearGradient id="zg" x1="0" y1="0" x2="1" y2="1"><stop offset="0" stop-color="#2f74f6"/><stop offset="1" stop-color="#0b57ee"/></linearGradient></defs><circle cx="18" cy="18" r="18" fill="url(#zg)"/><text x="18" y="20.8" font-family="Liberation Sans, sans-serif" font-size="10" font-weight="700" fill="#ffffff" text-anchor="middle" letter-spacing="-.2">zoom</text></svg>
<svg style="left:1352px;top:1058px;" width="40" height="38" viewBox="0 0 40 38"><circle cx="22" cy="21" r="13" fill="#f4a62a"/><path d="M2 17h22M5 22h24M3 27h20" stroke="#fce6b0" stroke-width="3" stroke-linecap="round" fill="none"/><path d="M8 32h22" stroke="#f4a62a" stroke-width="3" stroke-linecap="round"/><circle cx="28" cy="9" r="8" fill="#d9272e"/><text x="28" y="13" font-family="Liberation Sans, sans-serif" font-size="11" fill="#ffffff" text-anchor="middle">1</text></svg>
<svg style="left:1482px;top:1069px;" width="20" height="14" viewBox="0 0 20 14"><path d="M1 12.500L10 2l9 10.5" fill="none" stroke="#ffffff" stroke-width="1.6"/></svg>
<svg style="left:1515px;top:1065px;" width="26" height="24" viewBox="0 0 26 24"><rect x="5" y="6" width="19" height="12" fill="#ffffff"/><rect x="24" y="9.5" width="2" height="5" fill="#ffffff"/><path d="M2.5 2v4M6.5 2v4M1 6h7v3c0 2-1.5 3-3.5 3S1 11 1 9zM4.5 12v5c0 3 3 3 3 5" fill="none" stroke="#ffffff" stroke-width="1.4"/></svg>
<svg style="left:1556px;top:1064px;" width="20" height="26" viewBox="0 0 20 26"><path d="M3 2.500c2.5-2 11.5-2 14 0M3 23.500c2.5 2 11.5 2 14 0" fill="none" stroke="#ffffff" stroke-width="1.5"/><rect x="1" y="7" width="12" height="12" rx="2.5" fill="none" stroke="#ffffff" stroke-width="1.5"/><path d="M13 11.500l5.5-3v9l-5.5-3" fill="none" stroke="#ffffff" stroke-width="1.5"/></svg>
<svg style="left:1588px;top:1066px;" width="24" height="22" viewBox="0 0 24 22"><path d="M1 7.500h4.500L11 2v18l-5.5-5.500H1z" fill="none" stroke="#ffffff" stroke-width="1.5" stroke-linejoin="round"/><path d="M15 7.500l7 7M22 7.500l-7 7" stroke="#ffffff" stroke-width="1.5" fill="none"/></svg>
<svg style="left:1628px;top:1063px;" width="15" height="28" viewBox="0 0 15 28"><rect x="3" y="1" width="9" height="17" rx="4.5" fill="#ffffff"/><path d="M1 13c0 9 13 9 13 0M7.5 20v5M3.5 26.500h8" fill="none" stroke="#ffffff" stroke-width="1.5"/></svg>
<svg style="left:1663px;top:1066px;" width="21" height="22" viewBox="0 0 21 22"><path d="M1.5 19.500A18 18 0 0 1 19.5 1.500M6.5 19.500A13 13 0 0 1 19.5 6.500M11.5 19.500a8 8 0 0 1 8-8" fill="none" stroke="#ffffff" stroke-width="1.5"/><circle cx="18" cy="18.5" r="2" fill="#ffffff"/></svg>
<svg style="left:1694px;top:1063px;" width="28" height="28" viewBox="0 0 28 28"><path d="M2 5l22-3.500v18L2 22z" fill="none" stroke="#ffffff" stroke-width="1.5"/><path d="M9 14a4.5 4.5 0 0 1 8-2.500M17 12a4.5 4.5 0 0 1-8 2.500M17 8.500v3h-3M9 18v-3h3" fill="none" stroke="#ffffff" stroke-width="1.3"/><circle cx="22" cy="22" r="4.5" fill="#2f8de4"/></svg>
<svg style="left:1857px;top:1064px;" width="27" height="27" viewBox="0 0 27 27"><path d="M1 1h22v17H12l-5 5v-5H1z" fill="#ffffff"/><path d="M5 6h14M5 10h14M5 14h8" stroke="#1c3049" stroke-width="1.3"/><circle cx="20.5" cy="20.5" r="5" fill="#1c3049" stroke="#ffffff" stroke-width="1.4"/><path d="M18.5 21.500a2.5 2.5 0 1 0 2-3.5" fill="none" stroke="#ffffff" stroke-width="1"/></svg>
<div style="left:1912px;top:1047px;width:1.5px;height:60px;background:#7d8995;"></div>
<div style="left:0px;top:1107px;width:1920px;height:93px;background:#1a1a1a;"></div>
<svg style="left:49px;top:1141px;" width="18" height="28" viewBox="0 0 18 28"><rect x="4" y="0.5" width="10" height="18" rx="5" fill="#ababab"/><path d="M1 12.500c0 10.5 16 10.5 16 0M9 21v4.500M4.5 26.500h9" fill="none" stroke="#ababab" stroke-width="2"/></svg>
<svg style="left:92px;top:1152px;" width="10" height="7" viewBox="0 0 10 7"><path d="M1 6l4-4.200L9 6" fill="none" stroke="#b4b4b4" stroke-width="1.7"/></svg>
<svg style="left:158px;top:1141px;" width="32" height="28" viewBox="0 0 32 28"><rect x="1" y="6" width="21" height="18" rx="4" fill="#ababab"/><path d="M23 13l8-5v14l-8-5z" fill="#ababab"/><path d="M4 27L29 1.5" stroke="#e0343f" stroke-width="2.2"/></svg>
<svg style="left:216px;top:1152px;" width="10" height="7" viewBox="0 0 10 7"><path d="M1 6l4-4.200L9 6" fill="none" stroke="#b4b4b4" stroke-width="1.7"/></svg>
<svg style="left:426px;top:1143px;" width="24" height="26" viewBox="0 0 24 26"><path d="M12 .500L23 4.500v8c0 6.5-4.5 10.5-11 13C5.5 23 1 19 1 12.500v-8z" fill="#ababab"/><path d="M12 3.500v9.500h8c0-3 0-5 0-6.500zM12 13v9.500C7 20 4 17.5 4 13z" fill="#1a1a1a"/></svg>
<svg style="left:553px;top:1144px;" width="32" height="25" viewBox="0 0 32 25"><circle cx="11" cy="7" r="5.5" fill="#ababab"/><path d="M1 24c0-7 4-10 10-10s10 3 10 10z" fill="#ababab"/><circle cx="23.5" cy="8.5" r="4.5" fill="#ababab"/><path d="M23 24c0-4-1-7-3-9 1-.500 2-1 4-1 5 0 8 3 8 10z" fill="#ababab"/></svg>
<svg style="left:630px;top:1152px;" width="10" height="7" viewBox="0 0 10 7"><path d="M1 6l4-4.200L9 6" fill="none" stroke="#b4b4b4" stroke-width="1.7"/></svg>
<svg style="left:694px;top:1143px;" width="27" height="27" viewBox="0 0 27 27"><path d="M5 1h17a4 4 0 0 1 4 4v10a4 4 0 0 1-4 4H13l-6 6.500V19H5a4 4 0 0 1-4-4V5a4 4 0 0 1 4-4z" fill="#ababab"/></svg>
<svg style="left:743px;top:1152px;" width="10" height="7" viewBox="0 0 10 7"><path d="M1 6l4-4.200L9 6" fill="none" stroke="#b4b4b4" stroke-width="1.7"/></svg>
<div style="left:810px;top:1145px;width:30px;height:22px;background:#23d959;border-radius:4px;"></div>
<svg style="left:818px;top:1149px;" width="14" height="15" viewBox="0 0 14 15"><path d="M7 14V2.500M2 7.500l5-5 5 5" fill="none" stroke="#0b2d14" stroke-width="2.3"/></svg>
<svg style="left:866px;top:1152px;" width="10" height="7" viewBox="0 0 10 7"><path d="M1 6l4-4.200L9 6" fill="none" stroke="#b4b4b4" stroke-width="1.7"/></svg>
<div style="left:944.5px;top:1140.3px;width:25px;height:25px;background:#ababab;border-radius:3.5px;"></div>
<div style="left:951.8px;top:1148px;width:3px;height:9.5px;background:#1a1a1a;"></div>
<div style="left:959.5px;top:1148px;width:3px;height:9.5px;background:#1a1a1a;"></div>
<div style="left:975.5px;top:1140.3px;width:25px;height:25px;background:#ababab;border-radius:3.5px;"></div>
<div style="left:983px;top:1148px;width:10px;height:10px;background:#1a1a1a;"></div>
<div style="left:1111.5px;top:1143.5px;width:12px;height:11.5px;background:#ababab;border-radius:2.500px;"></div>
<div style="left:1125.5px;top:1143.5px;width:12px;height:11.5px;background:#ababab;border-radius:2.500px;"></div>
<div style="left:1111.5px;top:1157.5px;width:12px;height:11.5px;background:#ababab;border-radius:2.500px;"></div>
<div style="left:1125.5px;top:1157.5px;width:12px;height:11.5px;background:#ababab;border-radius:2.500px;"></div>
<svg style="left:1228px;top:1140.3px;" width="29" height="28" viewBox="0 0 29 28"><circle cx="12" cy="16" r="11.5" fill="#ababab"/><circle cx="8" cy="13" r="1.7" fill="#1a1a1a"/><circle cx="16" cy="13" r="1.7" fill="#1a1a1a"/><path d="M6.5 18c2.5 5 8.5 5 11 0z" fill="#1a1a1a"/><circle cx="23" cy="6" r="6.5" fill="#1a1a1a"/><path d="M23 2v8M19 6h8" stroke="#ababab" stroke-width="1.8"/></svg>
<svg style="left:1338px;top:1143.5px;" width="27" height="24" viewBox="0 0 27 24"><rect x="2.1" y="2.2" width="22.4" height="17" rx="3.5" fill="none" stroke="#ababab" stroke-width="2.2"/><rect x="10" y="15.3" width="17" height="7" rx="3" fill="#1a1a1a"/><rect x="11.5" y="16.5" width="14.5" height="4.8" rx="2.4" fill="#ababab"/></svg>
<svg style="left:1392px;top:1152px;" width="10" height="7" viewBox="0 0 10 7"><path d="M1 6l4-4.200L9 6" fill="none" stroke="#b4b4b4" stroke-width="1.7"/></svg>
<svg style="left:1463px;top:1143px;" width="24" height="27" viewBox="0 0 24 27"><rect x="3.5" y="1.5" width="16" height="22" rx="2.5" fill="none" stroke="#ababab" stroke-width="2"/><path d="M1 6h4M1 11h4M1 16h4M8 7h8M8 11.500h8M8 16h5" stroke="#ababab" stroke-width="1.7" fill="none"/><rect x="10.5" y="19.5" width="13" height="6" rx="2.5" fill="#ababab" stroke="#1a1a1a" stroke-width="1.3"/></svg>
<svg style="left:1515px;top:1152px;" width="10" height="7" viewBox="0 0 10 7"><path d="M1 6l4-4.200L9 6" fill="none" stroke="#b4b4b4" stroke-width="1.7"/></svg>
<div style="left:1576.5px;top:1153.5px;width:5px;height:5px;background:#ababab;border-radius:3px;"></div>
<div style="left:1586.5px;top:1153.5px;width:5px;height:5px;background:#ababab;border-radius:3px;"></div>
<div style="left:1596.5px;top:1153.5px;width:5px;height:5px;background:#ababab;border-radius:3px;"></div>
<div style="left:1828.5px;top:1150px;width:76.5px;height:33.5px;background:#c9252d;border-radius:8px;"></div>
<div style="left:10px;top:10px;width:30px;height:30px;background:#252526;border-radius:6px;"></div>
<svg style="left:17px;top:16.5px;" width="17" height="18" viewBox="0 0 17 18"><path d="M8.5 .300L16.5 3v6c0 4.5-3.5 7.3-8 8.700C4 16.3 .500 13.5 .500 9V3z" fill="#26d95f"/><path d="M4.8 8.800l2.7 2.7 4.8-5" fill="none" stroke="#14532a" stroke-width="1.8"/></svg>
<div style="left:50px;top:10px;width:220px;height:32.5px;background:#111111;border-radius:4px;"></div>
<div style="left:203px;top:10px;width:67px;height:32.5px;background:#0c0c0c;border-radius:0 4px 4px 0;"></div>
<div style="left:237px;top:10px;width:1px;height:32.5px;background:#1c1c1c;"></div>
<svg style="left:63px;top:15px;" width="24" height="18" viewBox="0 0 24 18"><path d="M6 17.500a5.5 5.5 0 0 1-1-10.900A7 7 0 0 1 18.5 6 5.8 5.8 0 0 1 18 17.500z" fill="#bdbdbd"/><circle cx="11.7" cy="10" r="3" fill="#d81e2a"/></svg>
<div style="left:216px;top:21.5px;width:4.5px;height:9.5px;background:#ffffff;"></div>
<div style="left:223.7px;top:21.5px;width:4.5px;height:9.5px;background:#ffffff;"></div>
<div style="left:250px;top:21.5px;width:11px;height:9.5px;background:#ffffff;"></div>
<div style="left:930px;top:0px;width:292px;height:27px;background:#23d95f;border-radius:0 0 0 4px;"></div>
<div style="left:1222px;top:0px;width:152px;height:27px;background:#1c1c1c;border-radius:0 0 4px 0;"></div>
<svg style="left:1352px;top:10px;" width="10" height="7" viewBox="0 0 10 7"><path d="M1 1l4 4.200L9 1" fill="none" stroke="#ffffff" stroke-width="1.7"/></svg>
<div style="left:1771px;top:10px;width:60px;height:32.5px;background:#232325;border-radius:9px;"></div>
<div style="left:1841px;top:10px;width:69px;height:32.5px;background:#232325;border-radius:9px;"></div>
<svg style="left:1850px;top:18px;" width="14" height="13" viewBox="0 0 14 13"><rect x="0" y="0" width="14" height="13" rx="1.5" fill="#d6d6d6"/><path d="M0 4h14M4.7 0v4M9.3 0v4" stroke="#232325" stroke-width="1.2"/></svg>
<div style="left:1606px;top:139.5px;width:286px;height:196px;background:#212121;border-radius:4px;box-shadow:0 2px 8px rgba(0,0,0,.5);"></div>
<div style="left:1606px;top:139.5px;width:286px;height:35px;background:#1a1a1a;border-radius:4px 4px 0 0;"></div>
<div style="left:1617px;top:161px;width:14.5px;height:4.5px;background:#d0d0d0;border-radius:1px;"></div>
<div style="left:1651px;top:155px;width:16px;height:10.5px;background:#2d8cff;border-radius:1.500px;"></div>
<div style="left:1686px;top:150.5px;width:15.5px;height:6.5px;background:#d0d0d0;border-radius:1.500px;"></div>
<div style="left:1686px;top:159px;width:15.5px;height:6.5px;background:#d0d0d0;border-radius:1.500px;"></div>
<div style="left:1720px;top:149px;width:5px;height:5px;background:#d0d0d0;border-radius:1px;"></div>
<div style="left:1720px;top:155.3px;width:5px;height:5px;background:#d0d0d0;border-radius:1px;"></div>
<div style="left:1720px;top:161.6px;width:5px;height:5px;background:#d0d0d0;border-radius:1px;"></div>
<div style="left:1726.5px;top:149px;width:5px;height:5px;background:#d0d0d0;border-radius:1px;"></div>
<div style="left:1726.5px;top:155.3px;width:5px;height:5px;background:#d0d0d0;border-radius:1px;"></div>
<div style="left:1726.5px;top:161.6px;width:5px;height:5px;background:#d0d0d0;border-radius:1px;"></div>
<div style="left:1733px;top:149px;width:5px;height:5px;background:#d0d0d0;border-radius:1px;"></div>
<div style="left:1733px;top:155.3px;width:5px;height:5px;background:#d0d0d0;border-radius:1px;"></div>
<div style="left:1733px;top:161.6px;width:5px;height:5px;background:#d0d0d0;border-radius:1px;"></div>
<svg style="left:1865px;top:150.5px;" width="20" height="15.5" viewBox="0 0 20 15.5"><path d="M1.5 0H10v6h10v8a1.5 1.5 0 0 1-1.5 1.500h-17A1.5 1.5 0 0 1 0 14V1.500A1.5 1.5 0 0 1 1.5 0z" fill="#d0d0d0"/><rect x="11.5" y="0" width="8.5" height="4.5" rx="1" fill="#d0d0d0"/></svg>
<div style="left:1609.5px;top:308.5px;width:91.5px;height:25px;background:#2b2b2b;border-radius:2px;"></div>
<svg style="left:1614px;top:312px;" width="17" height="18" viewBox="0 0 17 18"><rect x="6" y="1" width="6" height="9.5" rx="3" fill="#e0404a"/><path d="M3.5 8c0 6.5 11 6.5 11 0M9 13v3M6 16.500h6" fill="none" stroke="#e0404a" stroke-width="1.4"/><path d="M1 17L15.5 1" stroke="#e0404a" stroke-width="1.6"/></svg>
<div style="left:1124px;top:354px;width:2px;height:24px;background:#0c0c0c;z-index:5;"></div>
<div style="left:1118px;top:353px;width:14px;height:1.6px;background:#0c0c0c;z-index:5;"></div>
<div style="left:1118px;top:376.6px;width:14px;height:1.6px;background:#0c0c0c;z-index:5;"></div>
<span style="left:78px;top:49.00px;font-size:22.5px;color:#cccccc;letter-spacing:-0.566px;">File</span>
<span style="left:142px;top:49.00px;font-size:22.5px;color:#cccccc;letter-spacing:-0.195px;">Edit</span>
<span style="left:209.5px;top:49.00px;font-size:22.5px;color:#cccccc;letter-spacing:0.049px;">Selection</span>
<span style="left:332px;top:49.00px;font-size:22.5px;color:#cccccc;letter-spacing:0.156px;">View</span>
<span style="left:410px;top:49.00px;font-size:22.5px;color:#cccccc;letter-spacing:-0.508px;">Go</span>
<span style="left:969.5px;top:48.00px;font-size:22.5px;color:#cccccc;letter-spacing:-0.507px;">example-app</span>
<span style="left:54px;top:884.00px;font-size:15px;color:#ffffff;font-weight:700;">1</span>
<span style="left:123px;top:114.00px;font-size:18.5px;color:#cccccc;letter-spacing:-1.471px;">EXPLORER</span>
<span style="left:148px;top:195.00px;font-size:22.5px;color:#cccccc;letter-spacing:0.113px;">lang</span>
<span style="left:148px;top:235.00px;font-size:22.5px;color:#cccccc;letter-spacing:0.534px;">public</span>
<span style="left:148px;top:274.00px;font-size:22.5px;color:#cccccc;letter-spacing:-0.200px;">resources</span>
<span style="left:162.3px;top:314.00px;font-size:22.5px;color:#cccccc;letter-spacing:-1.483px;">css</span>
<span style="left:162.3px;top:353.00px;font-size:22.5px;color:#cccccc;letter-spacing:-1.025px;">js</span>
<span style="left:162.3px;top:393.00px;font-size:22.5px;color:#cccccc;letter-spacing:-0.313px;">views</span>
<span style="left:176.6px;top:432.00px;font-size:22.5px;color:#cccccc;letter-spacing:0.292px;">employee</span>
<span style="left:190.9px;top:472.00px;font-size:22.5px;color:#cccccc;letter-spacing:0.154px;">create.blade.php</span>
<span style="left:190.9px;top:511.00px;font-size:22.5px;color:#cccccc;letter-spacing:0.247px;">index.blade.php</span>
<span style="left:176.6px;top:551.00px;font-size:22.5px;color:#cccccc;letter-spacing:0.400px;">about.blade.php</span>
<span style="left:176.6px;top:590.00px;font-size:22.5px;color:#cccccc;letter-spacing:0.411px;">template.blade.php</span>
<span style="left:176.6px;top:630.00px;font-size:22.5px;color:#cccccc;letter-spacing:0.289px;">welcome.blade.php</span>
<span style="left:148px;top:669.00px;font-size:22.5px;color:#cccccc;letter-spacing:0.242px;">routes</span>
<span style="left:162.3px;top:709.00px;font-size:22.5px;color:#cccccc;letter-spacing:0.267px;">api.php</span>
<span style="left:162.3px;top:748.00px;font-size:22.5px;color:#cccccc;letter-spacing:0.070px;">channels.php</span>
<span style="left:162.3px;top:788.00px;font-size:22.5px;color:#cccccc;letter-spacing:0.249px;">console.php</span>
<span style="left:162.3px;top:827.00px;font-size:22.5px;color:#cccccc;letter-spacing:0.289px;">web.php</span>
<span style="left:148px;top:867.00px;font-size:22.5px;color:#cccccc;letter-spacing:0.220px;">storage</span>
<span style="left:148px;top:906.00px;font-size:22.5px;color:#cccccc;letter-spacing:-0.206px;">tests</span>
<span style="left:123px;top:164.00px;font-size:19.5px;color:#cccccc;font-weight:700;letter-spacing:-0.533px;">EXAMPLE-APP</span>
<span style="left:122.5px;top:938.00px;font-size:19.5px;color:#cccccc;font-weight:700;letter-spacing:-0.356px;">OUTLINE</span>
<span style="left:122.5px;top:977.00px;font-size:19.5px;color:#cccccc;font-weight:700;letter-spacing:-0.137px;">TIMELINE</span>
<span style="left:605px;top:113.00px;font-size:22.5px;color:#9d9d9d;letter-spacing:0.440px;">about.blade.php</span>
<span style="left:883px;top:113.00px;font-size:22.5px;color:#9d9d9d;letter-spacing:0.422px;">template.blade.php</span>
<span style="left:1191.5px;top:113.00px;font-size:22.5px;color:#ffffff;letter-spacing:0.307px;">index.blade.php</span>
<span style="left:576px;top:164.00px;font-size:22.5px;color:#a9a9a9;letter-spacing:-0.122px;">resources</span>
<span style="left:703.7px;top:164.00px;font-size:22.5px;color:#a9a9a9;letter-spacing:-0.233px;">views</span>
<span style="left:788px;top:164.00px;font-size:22.5px;color:#a9a9a9;letter-spacing:0.380px;">employee</span>
<span style="left:958px;top:164.00px;font-size:22.5px;color:#a9a9a9;letter-spacing:0.274px;">index.blade.php</span>
<span style="left:1185px;top:164.00px;font-size:22.5px;color:#a9a9a9;letter-spacing:0.464px;">table.table.table-bordered</span>
<span style="left:669.6px;top:201.00px;font-size:23.08px;color:#d4d4d4;font-family:'Liberation Mono', monospace;-webkit-text-stroke:0.35px;"><i style="color:#569cd6">@extends</i><i style="color:#ffd700">(</i><i style="color:#ce9178">'template'</i><i style="color:#ffd700">)</i></span>
<span style="left:608.35px;top:201.00px;font-size:23.08px;color:#6e7681;font-family:'Liberation Mono', monospace;">1</span>
<span style="left:669.6px;top:235.00px;font-size:23.08px;color:#d4d4d4;font-family:'Liberation Mono', monospace;-webkit-text-stroke:0.35px;"><i style="color:#569cd6">@section</i><i style="color:#ffd700">(</i><i style="color:#ce9178">'title'</i><i style="color:#d4d4d4">, </i><i style="color:#ce9178">'Daftar Karyawan'</i><i style="color:#ffd700">)</i></span>
<span style="left:608.35px;top:235.00px;font-size:23.08px;color:#6e7681;font-family:'Liberation Mono', monospace;">2</span>
<span style="left:669.6px;top:269.00px;font-size:23.08px;color:#d4d4d4;font-family:'Liberation Mono', monospace;-webkit-text-stroke:0.35px;"><i style="color:#569cd6">@section</i><i style="color:#ffd700">(</i><i style="color:#ce9178">'content'</i><i style="color:#ffd700">)</i></span>
<span style="left:608.35px;top:269.00px;font-size:23.08px;color:#6e7681;font-family:'Liberation Mono', monospace;">3</span>
<span style="left:669.6px;top:303.00px;font-size:23.08px;color:#d4d4d4;font-family:'Liberation Mono', monospace;-webkit-text-stroke:0.35px;"><i style="color:#808080">&lt;</i><i style="color:#569cd6">a</i><i style="color:#d4d4d4"> </i><i style="color:#9cdcfe">href</i><i style="color:#d4d4d4">=</i><i style="color:#ce9178">"/employee/create"</i><i style="color:#808080">&gt;</i><i style="color:#d4d4d4">Tambah Data</i><i style="color:#808080">&lt;/</i><i style="color:#569cd6">a</i><i style="color:#808080">&gt;</i></span>
<span style="left:608.35px;top:303.00px;font-size:23.08px;color:#6e7681;font-family:'Liberation Mono', monospace;">4</span>
<span style="left:669.6px;top:338.00px;font-size:23.08px;color:#d4d4d4;font-family:'Liberation Mono', monospace;-webkit-text-stroke:0.35px;"><i style="color:#808080">&lt;</i><i style="color:#569cd6">hr</i><i style="color:#808080">&gt;</i></span>
<span style="left:608.35px;top:338.00px;font-size:23.08px;color:#6e7681;font-family:'Liberation Mono', monospace;">5</span>
<span style="left:669.6px;top:372.00px;font-size:23.08px;color:#d4d4d4;font-family:'Liberation Mono', monospace;-webkit-text-stroke:0.35px;"><i style="color:#808080">&lt;</i><i style="color:#569cd6">table</i><i style="color:#d4d4d4"> </i><i style="color:#9cdcfe">class</i><i style="color:#d4d4d4">=</i><i style="color:#ce9178">"table table-bordered"</i><i style="color:#808080">&gt;</i></span>
<span style="left:608.35px;top:372.00px;font-size:23.08px;color:#cccccc;font-family:'Liberation Mono', monospace;">6</span>
<span style="left:669.6px;top:406.00px;font-size:23.08px;color:#d4d4d4;font-family:'Liberation Mono', monospace;-webkit-text-stroke:0.35px;"><i style="color:#d4d4d4">    </i><i style="color:#808080">&lt;</i><i style="color:#569cd6">tr</i><i style="color:#808080">&gt;</i></span>
<span style="left:608.35px;top:406.00px;font-size:23.08px;color:#6e7681;font-family:'Liberation Mono', monospace;">7</span>
<span style="left:669.6px;top:440.00px;font-size:23.08px;color:#d4d4d4;font-family:'Liberation Mono', monospace;-webkit-text-stroke:0.35px;"><i style="color:#d4d4d4">        </i><i style="color:#808080">&lt;</i><i style="color:#569cd6">th</i><i style="color:#808080">&gt;</i><i style="color:#d4d4d4">NIP</i><i style="color:#808080">&lt;/</i><i style="color:#569cd6">th</i><i style="color:#808080">&gt;</i></span>
<span style="left:608.35px;top:440.00px;font-size:23.08px;color:#6e7681;font-family:'Liberation Mono', monospace;">8</span>
<span style="left:669.6px;top:474.00px;font-size:23.08px;color:#d4d4d4;font-family:'Liberation Mono', monospace;-webkit-text-stroke:0.35px;"><i style="color:#d4d4d4">        </i><i style="color:#808080">&lt;</i><i style="color:#569cd6">th</i><i style="color:#808080">&gt;</i><i style="color:#d4d4d4">Nama</i><i style="color:#808080">&lt;/</i><i style="color:#569cd6">th</i><i style="color:#808080">&gt;</i></span>
<span style="left:608.35px;top:474.00px;font-size:23.08px;color:#6e7681;font-family:'Liberation Mono', monospace;">9</span>
<span style="left:669.6px;top:509.00px;font-size:23.08px;color:#d4d4d4;font-family:'Liberation Mono', monospace;-webkit-text-stroke:0.35px;"><i style="color:#d4d4d4">        </i><i style="color:#808080">&lt;</i><i style="color:#569cd6">th</i><i style="color:#808080">&gt;</i><i style="color:#d4d4d4">Email</i><i style="color:#808080">&lt;/</i><i style="color:#569cd6">th</i><i style="color:#808080">&gt;</i></span>
<span style="left:594.5px;top:509.00px;font-size:23.08px;color:#6e7681;font-family:'Liberation Mono', monospace;">10</span>
<span style="left:669.6px;top:543.00px;font-size:23.08px;color:#d4d4d4;font-family:'Liberation Mono', monospace;-webkit-text-stroke:0.35px;"><i style="color:#d4d4d4">        </i><i style="color:#808080">&lt;</i><i style="color:#569cd6">th</i><i style="color:#808080">&gt;</i><i style="color:#d4d4d4">Nomor HP</i><i style="color:#808080">&lt;/</i><i style="color:#569cd6">th</i><i style="color:#808080">&gt;</i></span>
<span style="left:594.5px;top:543.00px;font-size:23.08px;color:#6e7681;font-family:'Liberation Mono', monospace;">11</span>
<span style="left:669.6px;top:577.00px;font-size:23.08px;color:#d4d4d4;font-family:'Liberation Mono', monospace;-webkit-text-stroke:0.35px;"><i style="color:#d4d4d4">        </i><i style="color:#808080">&lt;</i><i style="color:#569cd6">th</i><i style="color:#808080">&gt;</i><i style="color:#d4d4d4">Tanggal Lahir</i><i style="color:#808080">&lt;/</i><i style="color:#569cd6">th</i><i style="color:#808080">&gt;</i></span>
<span style="left:594.5px;top:577.00px;font-size:23.08px;color:#6e7681;font-family:'Liberation Mono', monospace;">12</span>
<span style="left:669.6px;top:611.00px;font-size:23.08px;color:#d4d4d4;font-family:'Liberation Mono', monospace;-webkit-text-stroke:0.35px;"><i style="color:#d4d4d4">    </i><i style="color:#808080">&lt;/</i><i style="color:#569cd6">tr</i><i style="color:#808080">&gt;</i></span>
<span style="left:594.5px;top:611.00px;font-size:23.08px;color:#6e7681;font-family:'Liberation Mono', monospace;">13</span>
<span style="left:669.6px;top:645.00px;font-size:23.08px;color:#d4d4d4;font-family:'Liberation Mono', monospace;-webkit-text-stroke:0.35px;"><i style="color:#d4d4d4">    </i><i style="color:#569cd6">@foreach</i><i style="color:#ffd700">(</i><i style="color:#9cdcfe">$employees</i><i style="color:#d4d4d4"> as </i><i style="color:#9cdcfe">$employee</i><i style="color:#ffd700">)</i></span>
<span style="left:594.5px;top:645.00px;font-size:23.08px;color:#6e7681;font-family:'Liberation Mono', monospace;">14</span>
<span style="left:669.6px;top:680.00px;font-size:23.08px;color:#d4d4d4;font-family:'Liberation Mono', monospace;-webkit-text-stroke:0.35px;"><i style="color:#d4d4d4">    </i><i style="color:#808080">&lt;</i><i style="color:#569cd6">tr</i><i style="color:#808080">&gt;</i></span>
<span style="left:594.5px;top:680.00px;font-size:23.08px;color:#6e7681;font-family:'Liberation Mono', monospace;">15</span>
<span style="left:669.6px;top:714.00px;font-size:23.08px;color:#d4d4d4;font-family:'Liberation Mono', monospace;-webkit-text-stroke:0.35px;"><i style="color:#d4d4d4">        </i><i style="color:#808080">&lt;</i><i style="color:#569cd6">td</i><i style="color:#808080">&gt;</i><i style="color:#ffd700">{</i><i style="color:#da70d6">{</i><i style="color:#d4d4d4"> </i><i style="color:#9cdcfe">$employee</i><i style="color:#179fff">[</i><i style="color:#ce9178">'nip'</i><i style="color:#179fff">]</i><i style="color:#da70d6">}</i><i style="color:#ffd700">}</i><i style="color:#808080">&lt;/</i><i style="color:#569cd6">td</i><i style="color:#808080">&gt;</i></span>
<span style="left:594.5px;top:714.00px;font-size:23.08px;color:#6e7681;font-family:'Liberation Mono', monospace;">16</span>
<span style="left:669.6px;top:748.00px;font-size:23.08px;color:#d4d4d4;font-family:'Liberation Mono', monospace;-webkit-text-stroke:0.35px;"><i style="color:#d4d4d4">        </i><i style="color:#808080">&lt;</i><i style="color:#569cd6">td</i><i style="color:#808080">&gt;</i><i style="color:#ffd700">{</i><i style="color:#da70d6">{</i><i style="color:#d4d4d4"> </i><i style="color:#9cdcfe">$employee</i><i style="color:#179fff">[</i><i style="color:#ce9178">'name'</i><i style="color:#179fff">]</i><i style="color:#da70d6">}</i><i style="color:#ffd700">}</i><i style="color:#808080">&lt;/</i><i style="color:#569cd6">td</i><i style="color:#808080">&gt;</i></span>
<span style="left:594.5px;top:748.00px;font-size:23.08px;color:#6e7681;font-family:'Liberation Mono', monospace;">17</span>
<span style="left:669.6px;top:782.00px;font-size:23.08px;color:#d4d4d4;font-family:'Liberation Mono', monospace;-webkit-text-stroke:0.35px;"><i style="color:#d4d4d4">        </i><i style="color:#808080">&lt;</i><i style="color:#569cd6">td</i><i style="color:#808080">&gt;</i><i style="color:#ffd700">{</i><i style="color:#da70d6">{</i><i style="color:#d4d4d4"> </i><i style="color:#9cdcfe">$employee</i><i style="color:#179fff">[</i><i style="color:#ce9178">'email'</i><i style="color:#179fff">]</i><i style="color:#da70d6">}</i><i style="color:#ffd700">}</i><i style="color:#808080">&lt;/</i><i style="color:#569cd6">td</i><i style="color:#808080">&gt;</i></span>
<span style="left:594.5px;top:782.00px;font-size:23.08px;color:#6e7681;font-family:'Liberation Mono', monospace;">18</span>
<span style="left:669.6px;top:816.00px;font-size:23.08px;color:#d4d4d4;font-family:'Liberation Mono', monospace;-webkit-text-stroke:0.35px;"><i style="color:#d4d4d4">        </i><i style="color:#808080">&lt;</i><i style="color:#569cd6">td</i><i style="color:#808080">&gt;</i><i style="color:#ffd700">{</i><i style="color:#da70d6">{</i><i style="color:#d4d4d4"> </i><i style="color:#9cdcfe">$employee</i><i style="color:#179fff">[</i><i style="color:#ce9178">'no_hp'</i><i style="color:#179fff">]</i><i style="color:#da70d6">}</i><i style="color:#ffd700">}</i><i style="color:#808080">&lt;/</i><i style="color:#569cd6">td</i><i style="color:#808080">&gt;</i></span>
<span style="left:594.5px;top:816.00px;font-size:23.08px;color:#6e7681;font-family:'Liberation Mono', monospace;">19</span>
<span style="left:669.6px;top:851.00px;font-size:23.08px;color:#d4d4d4;font-family:'Liberation Mono', monospace;-webkit-text-stroke:0.35px;"><i style="color:#d4d4d4">        </i><i style="color:#808080">&lt;</i><i style="color:#569cd6">td</i><i style="color:#808080">&gt;</i><i style="color:#ffd700">{</i><i style="color:#da70d6">{</i><i style="color:#d4d4d4"> </i><i style="color:#9cdcfe">$employee</i><i style="color:#179fff">[</i><i style="color:#ce9178">'tanggal_lahir'</i><i style="color:#179fff">]</i><i style="color:#da70d6">}</i><i style="color:#ffd700">}</i><i style="color:#808080">&lt;/</i><i style="color:#569cd6">td</i><i style="color:#808080">&gt;</i></span>
<span style="left:594.5px;top:851.00px;font-size:23.08px;color:#6e7681;font-family:'Liberation Mono', monospace;">20</span>
<span style="left:669.6px;top:885.00px;font-size:23.08px;color:#d4d4d4;font-family:'Liberation Mono', monospace;-webkit-text-stroke:0.35px;"><i style="color:#d4d4d4">    </i><i style="color:#808080">&lt;/</i><i style="color:#569cd6">tr</i><i style="color:#808080">&gt;</i></span>
<span style="left:594.5px;top:885.00px;font-size:23.08px;color:#6e7681;font-family:'Liberation Mono', monospace;">21</span>
<span style="left:669.6px;top:919.00px;font-size:23.08px;color:#d4d4d4;font-family:'Liberation Mono', monospace;-webkit-text-stroke:0.35px;"><i style="color:#d4d4d4">    </i><i style="color:#569cd6">@endforeach</i></span>
<span style="left:594.5px;top:919.00px;font-size:23.08px;color:#6e7681;font-family:'Liberation Mono', monospace;">22</span>
<span style="left:669.6px;top:953.00px;font-size:23.08px;color:#d4d4d4;font-family:'Liberation Mono', monospace;-webkit-text-stroke:0.35px;"><i style="color:#808080">&lt;/</i><i style="color:#569cd6">table</i><i style="color:#808080">&gt;</i></span>
<span style="left:594.5px;top:953.00px;font-size:23.08px;color:#6e7681;font-family:'Liberation Mono', monospace;">23</span>
<span style="left:669.6px;top:987.00px;font-size:23.08px;color:#d4d4d4;font-family:'Liberation Mono', monospace;-webkit-text-stroke:0.35px;"><i style="color:#569cd6">@endsection</i></span>
<span style="left:594.5px;top:987.00px;font-size:23.08px;color:#6e7681;font-family:'Liberation Mono', monospace;">24</span>
<span style="left:107px;top:1016.00px;font-size:21px;color:#cccccc;letter-spacing:-0.688px;">0</span>
<span style="left:156px;top:1016.00px;font-size:21px;color:#cccccc;letter-spacing:-0.887px;">0</span>
<span style="left:227.4px;top:1016.00px;font-size:21px;color:#cccccc;letter-spacing:-1.088px;">0</span>
<span style="left:1047.5px;top:1016.00px;font-size:21px;color:#cccccc;letter-spacing:-0.188px;">Ln 6, Col 35</span>
<span style="left:1187.5px;top:1016.00px;font-size:21px;color:#cccccc;letter-spacing:-0.656px;">Spaces: 4</span>
<span style="left:1304px;top:1016.00px;font-size:21px;color:#cccccc;letter-spacing:-0.500px;">UTF-8</span>
<span style="left:1390px;top:1016.00px;font-size:21px;color:#cccccc;letter-spacing:-2.086px;">CRLF</span>
<span style="left:1466px;top:1016.00px;font-size:21px;color:#cccccc;letter-spacing:-0.344px;">Blade</span>
<span style="left:1576px;top:1016.00px;font-size:21px;color:#ffffff;letter-spacing:0.108px;">Tabnine: Sign-in is required</span>
<span style="left:132.7px;top:1069.00px;font-size:22.5px;color:#1f1f1f;letter-spacing:-0.136px;">Type here to search</span>
<span style="left:1401px;top:1068.00px;font-size:22px;color:#ffffff;letter-spacing:-1.539px;">26°C</span>
<span style="left:1761.5px;top:1054.00px;font-size:19.5px;color:#ffffff;letter-spacing:-1.262px;">15:17</span>
<span style="left:1736px;top:1082.00px;font-size:19.5px;color:#ffffff;letter-spacing:-0.316px;">06/11/2023</span>
<span style="left:40px;top:1178.00px;font-size:15.5px;color:#cdd1d6;letter-spacing:0.383px;-webkit-text-stroke:0.45px;">Mute</span>
<span style="left:136px;top:1178.00px;font-size:15.5px;color:#cdd1d6;letter-spacing:-0.082px;-webkit-text-stroke:0.45px;">Start Video</span>
<span style="left:410px;top:1178.00px;font-size:15.5px;color:#cdd1d6;letter-spacing:-0.125px;-webkit-text-stroke:0.45px;">Security</span>
<span style="left:590px;top:1147.00px;font-size:13.5px;color:#cdd1d6;">3</span>
<span style="left:529px;top:1178.00px;font-size:15.5px;color:#cdd1d6;letter-spacing:-0.082px;-webkit-text-stroke:0.45px;">Participants</span>
<span style="left:691.5px;top:1178.00px;font-size:15.5px;color:#cdd1d6;letter-spacing:-0.312px;-webkit-text-stroke:0.45px;">Chat</span>
<span style="left:781px;top:1178.00px;font-size:15.5px;color:#23d959;letter-spacing:-0.482px;-webkit-text-stroke:0.45px;">Share Screen</span>
<span style="left:897px;top:1179.00px;font-size:15.5px;color:#cdd1d6;letter-spacing:-0.205px;-webkit-text-stroke:0.45px;">Pause/Stop Recording</span>
<span style="left:1068.5px;top:1178.00px;font-size:15.5px;color:#cdd1d6;letter-spacing:-0.282px;-webkit-text-stroke:0.45px;">Breakout Rooms</span>
<span style="left:1207.5px;top:1178.00px;font-size:15.5px;color:#cdd1d6;letter-spacing:-0.438px;-webkit-text-stroke:0.45px;">Reactions</span>
<span style="left:1308.5px;top:1178.00px;font-size:15.5px;color:#cdd1d6;letter-spacing:-0.047px;-webkit-text-stroke:0.45px;">Whiteboards</span>
<span style="left:1455px;top:1178.00px;font-size:15.5px;color:#cdd1d6;letter-spacing:-0.300px;-webkit-text-stroke:0.45px;">Notes</span>
<span style="left:1571px;top:1178.00px;font-size:15.5px;color:#cdd1d6;letter-spacing:0.043px;-webkit-text-stroke:0.45px;">More</span>
<span style="left:1853.5px;top:1159.00px;font-size:15px;color:#ffffff;font-weight:700;letter-spacing:-0.948px;">End</span>
<span style="left:98px;top:17.00px;font-size:15px;color:#ffffff;letter-spacing:-0.198px;">Recording...</span>
<span style="left:950px;top:7.00px;font-size:14.5px;color:#173d22;font-weight:700;letter-spacing:-0.037px;">You are viewing nuris akbar's screen</span>
<span style="left:1241px;top:7.00px;font-size:14.5px;color:#ffffff;font-weight:700;letter-spacing:-0.216px;">View Options</span>
<span style="left:1779px;top:17.00px;font-size:15.5px;color:#e6e6e6;letter-spacing:-0.344px;">Sign in</span>
<span style="left:1869.5px;top:17.00px;font-size:15.5px;color:#e6e6e6;letter-spacing:-0.582px;">View</span>
<span style="left:1702.7px;top:245.00px;font-size:22.5px;color:#ffffff;font-weight:700;letter-spacing:0.249px;">alvy fajri</span>
<span style="left:1637.5px;top:314.00px;font-size:16px;color:#ffffff;letter-spacing:-0.039px;">alvy fajri</span>
</div></body></html>
